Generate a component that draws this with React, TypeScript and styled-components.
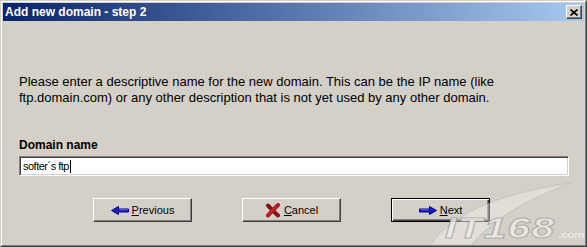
import React from "react";
import styled, { createGlobalStyle } from "styled-components";

const Global = createGlobalStyle`
  html, body { margin: 0; padding: 0; background: #d4d0c8; }
  body { font-family: "Liberation Sans", Arial, sans-serif; }
`;

const Window = styled.div`
  position: relative;
  box-sizing: border-box;
  width: 587px;
  height: 247px;
  background: #d4d0c8;
  border: 1px solid;
  border-color: #d4d0c8 #404040 #404040 #d4d0c8;
  display: flex;
  flex-direction: column;
  overflow: hidden;
`;

const Frame = styled.div`
  flex: 1;
  display: flex;
  flex-direction: column;
  border: 1px solid;
  border-color: #ffffff #808080 #808080 #ffffff;
  padding: 1px;
`;

const TitleBar = styled.div`
  height: 18px;
  display: flex;
  align-items: center;
  justify-content: space-between;
  padding: 0 2px 0 2px;
  background: linear-gradient(to right, #0a246a, #a6caf0);
`;

const TitleText = styled.span`
  color: #ffffff;
  font: bold 12px/18px "Liberation Sans", Arial, sans-serif;
  white-space: nowrap;
`;

const CloseButton = styled.div`
  box-sizing: border-box;
  width: 16px;
  height: 14px;
  background: #d4d0c8;
  border: 1px solid;
  border-color: #ffffff #404040 #404040 #ffffff;
  box-shadow: inset -1px -1px #808080;
  display: flex;
  align-items: center;
  justify-content: center;
`;

const Content = styled.div`
  display: flex;
  flex-direction: column;
  padding: 0 15px 0 16px;
`;

const Description = styled.p`
  margin: 53px 0 0 0;
  font-size: 13px;
  line-height: 16px;
  color: #000;
  white-space: nowrap;
`;

const FieldLabel = styled.div`
  margin-top: 32px;
  font: bold 12px/14px "Liberation Sans", Arial, sans-serif;
  color: #000;
`;

const TextField = styled.div`
  box-sizing: border-box;
  margin-top: 4px;
  height: 20px;
  background: #ffffff;
  border: 1px solid;
  border-color: #808080 #ffffff #ffffff #808080;
  box-shadow: inset 1px 1px #404040, inset -1px -1px #d4d0c8;
  display: flex;
  align-items: center;
  padding-left: 3px;
  font-size: 11px;
  letter-spacing: -0.5px;
  color: #000;
`;

const Caret = styled.span`
  display: inline-block;
  width: 1px;
  height: 13px;
  background: #000;
  margin-left: 1px;
`;

const ButtonRow = styled.div`
  display: flex;
  gap: 50px;
  margin: 22px 0 0 74px;
`;

const Button = styled.div<{ $default?: boolean }>`
  box-sizing: border-box;
  width: 99px;
  height: 24px;
  display: flex;
  align-items: center;
  justify-content: center;
  gap: 3px;
  font-size: 11px;
  color: #000;
  background: #d4d0c8;
  border: 1px solid;
  border-color: ${(p) => (p.$default ? "#000 #000 #000 #000" : "#ffffff #404040 #404040 #ffffff")};
  box-shadow: ${(p) =>
    p.$default
      ? "inset 1px 1px #ffffff, inset -1px -1px #404040, inset -2px -2px #808080"
      : "inset -1px -1px #808080"};
`;

const AccessKey = styled.span`
  text-decoration: underline;
`;

const Watermark = styled.div`
  position: absolute;
  left: 420px;
  top: 176px;
  width: 165px;
  height: 70px;
  pointer-events: none;
  z-index: 2;
`;

const WatermarkText = styled.div`
  position: absolute;
  left: 24px;
  top: 36px;
  display: flex;
  align-items: baseline;
  font: italic bold 30px/30px "Liberation Sans", Arial, sans-serif;
  letter-spacing: 1px;
  transform: scaleX(1.35);
  transform-origin: left center;
  color: rgba(238, 236, 232, 0.85);
  -webkit-text-stroke: 1px rgba(135, 130, 122, 0.55);
`;

const WatermarkSmall = styled.span`
  font: normal 9px/9px "Liberation Sans", Arial, sans-serif;
  letter-spacing: 0;
  -webkit-text-stroke: 0;
  color: rgba(250, 250, 250, 0.85);
  margin-left: 2px;
`;

const ArrowIcon = ({ dir }: { dir: "left" | "right" }) => (
  <svg width="18" height="9" viewBox="0 0 18 9" style={{ transform: dir === "right" ? "scaleX(-1)" : undefined }}>
    <path d="M0.5 4.5 L7.5 0.5 L7.5 3 L17.5 3 L17.5 6 L7.5 6 L7.5 8.5 Z" fill="#1c1cc0" stroke="#000080" strokeWidth="1" strokeLinejoin="round" />
    <path d="M8.5 3.8 L16.5 3.8" stroke="#6a6ae8" strokeWidth="1" />
  </svg>
);

const CancelIcon = () => (
  <svg width="16" height="15" viewBox="0 0 16 15">
    <path d="M3 2.5 C6 5.5 9 9 13 12.5" stroke="#8c1010" strokeWidth="4" strokeLinecap="round" fill="none" />
    <path d="M13 2 C10 5 6.5 8.5 3 12.5" stroke="#a81a1a" strokeWidth="4" strokeLinecap="round" fill="none" />
    <path d="M12 2.5 C9.5 5 7 7.5 4 11" stroke="#d04040" strokeWidth="1" strokeLinecap="round" fill="none" />
  </svg>
);

const CloseGlyph = () => (
  <svg width="8" height="7" viewBox="0 0 8 7">
    <path d="M0.5 0.5 L7.5 6.5 M7.5 0.5 L0.5 6.5" stroke="#000" strokeWidth="1.6" />
  </svg>
);

const Swoosh = () => (
  <svg width="165" height="70" viewBox="0 0 165 70" style={{ position: "absolute", left: 0, top: 0 }}>
    <path d="M10 68 C28 40 70 18 150 6 C112 20 76 38 50 68 Z" fill="rgba(242,240,236,0.45)" stroke="rgba(160,155,148,0.3)" />
  </svg>
);

export default function App() {
  return (
    <>
      <Global />
      <Window>
        <Frame>
          <TitleBar>
            <TitleText>Add new domain - step 2</TitleText>
            <CloseButton>
              <CloseGlyph />
            </CloseButton>
          </TitleBar>
          <Content>
            <Description>
              Please enter a descriptive name for the new domain. This can be the IP name (like
              <br />
              ftp.domain.com) or any other description that is not yet used by any other domain.
            </Description>
            <FieldLabel>Domain name</FieldLabel>
            <TextField>
              softer´s ftp
              <Caret />
            </TextField>
            <ButtonRow>
              <Button>
                <ArrowIcon dir="left" />
                <span>
                  <AccessKey>P</AccessKey>revious
                </span>
              </Button>
              <Button>
                <CancelIcon />
                <span>
                  <AccessKey>C</AccessKey>ancel
                </span>
              </Button>
              <Button $default>
                <ArrowIcon dir="right" />
                <span>
                  <AccessKey>N</AccessKey>ext
                </span>
              </Button>
            </ButtonRow>
          </Content>
        </Frame>
        <Watermark>
          <Swoosh />
          <WatermarkText>
            IT168<WatermarkSmall>.com</WatermarkSmall>
          </WatermarkText>
        </Watermark>
      </Window>
    </>
  );
}
